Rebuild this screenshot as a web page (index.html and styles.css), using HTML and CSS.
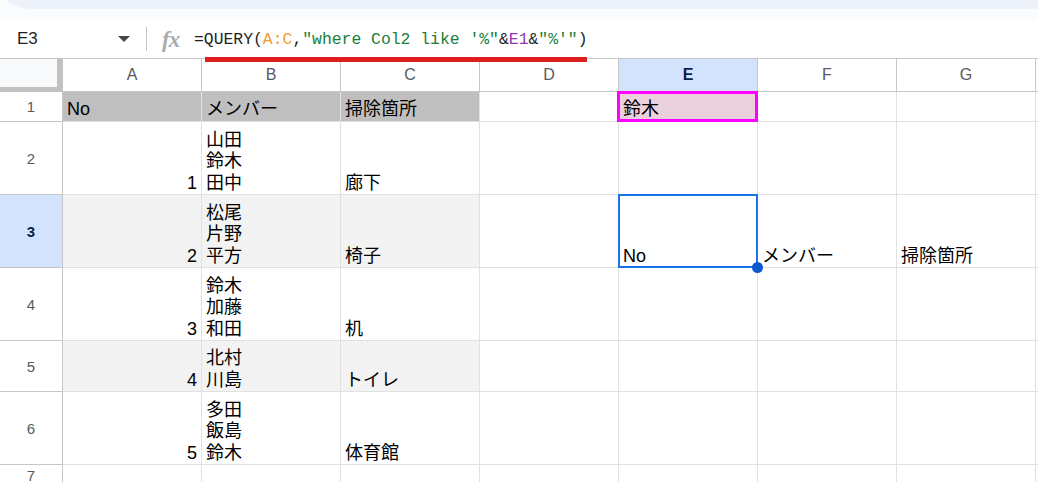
FILE: index.html
```html
<!DOCTYPE html>
<html lang="ja">
<head>
<meta charset="utf-8">
<title>シート1</title>
<link rel="stylesheet" href="styles.css">
</head>
<body>
<div class="top"><div class="toolbar-edge"></div></div>

<div class="fbar">
  <div class="namebox">
    <span class="ref">E3</span>
    <span class="caret"></span>
  </div>
  <div class="sep"></div>
  <span class="fx">fx</span>
  <div class="formula"><span>=QUERY(</span><span class="f-range">A:C</span><span>,</span><span class="f-str">"where Col2 like '%"</span><span>&amp;</span><span class="f-ref">E1</span><span>&amp;</span><span class="f-str">"%'"</span><span>)</span></div>
  <div class="mark"></div>
</div>

<div class="sheet">
  <!-- column headers -->
  <div class="corner"></div>
  <div class="ch">A</div>
  <div class="ch">B</div>
  <div class="ch">C</div>
  <div class="ch">D</div>
  <div class="ch ch-sel">E</div>
  <div class="ch">F</div>
  <div class="ch">G</div>
  <div class="ch ch-end"></div>

  <!-- row 1 -->
  <div class="rh">1</div>
  <div class="c hd">No</div>
  <div class="c hd">メンバー</div>
  <div class="c hd">掃除箇所</div>
  <div class="c"></div>
  <div class="c key">鈴木</div>
  <div class="c"></div>
  <div class="c"></div>
  <div class="c c-end"></div>

  <!-- row 2 -->
  <div class="rh">2</div>
  <div class="c num">1</div>
  <div class="c">山田<br>鈴木<br>田中</div>
  <div class="c">廊下</div>
  <div class="c"></div>
  <div class="c"></div>
  <div class="c"></div>
  <div class="c"></div>
  <div class="c c-end"></div>

  <!-- row 3 -->
  <div class="rh rh-sel">3</div>
  <div class="c band num">2</div>
  <div class="c band">松尾<br>片野<br>平方</div>
  <div class="c band">椅子</div>
  <div class="c"></div>
  <div class="c active">No</div>
  <div class="c">メンバー</div>
  <div class="c">掃除箇所</div>
  <div class="c c-end"></div>

  <!-- row 4 -->
  <div class="rh">4</div>
  <div class="c num">3</div>
  <div class="c">鈴木<br>加藤<br>和田</div>
  <div class="c">机</div>
  <div class="c"></div>
  <div class="c"></div>
  <div class="c"></div>
  <div class="c"></div>
  <div class="c c-end"></div>

  <!-- row 5 -->
  <div class="rh">5</div>
  <div class="c band num">4</div>
  <div class="c band">北村<br>川島</div>
  <div class="c band">トイレ</div>
  <div class="c"></div>
  <div class="c"></div>
  <div class="c"></div>
  <div class="c"></div>
  <div class="c c-end"></div>

  <!-- row 6 -->
  <div class="rh">6</div>
  <div class="c num">5</div>
  <div class="c">多田<br>飯島<br>鈴木</div>
  <div class="c">体育館</div>
  <div class="c"></div>
  <div class="c"></div>
  <div class="c"></div>
  <div class="c"></div>
  <div class="c c-end"></div>

  <!-- row 7 -->
  <div class="rh rh-top">7</div>
  <div class="c"></div>
  <div class="c"></div>
  <div class="c"></div>
  <div class="c"></div>
  <div class="c"></div>
  <div class="c"></div>
  <div class="c"></div>
  <div class="c c-end"></div>
</div>
</body>
</html>
```

FILE: styles.css
```css
* {
  box-sizing: border-box;
}

html,
body {
  margin: 0;
  padding: 0;
  width: 1038px;
  height: 482px;
  overflow: hidden;
  background: #ffffff;
  font-family: "Liberation Sans", "Noto Sans CJK JP", sans-serif;
}

/* strip below the toolbar */
.top {
  height: 20px;
  background: #f9fbfd;
}

.toolbar-edge {
  height: 9px;
  margin-left: 8px;
  background: #edf2fa;
  border-bottom-left-radius: 26px 9px;
}

/* formula bar */
.fbar {
  position: relative;
  height: 39px;
  display: flex;
  align-items: center;
  border-bottom: 1px solid #c7c7c7;
  background: #ffffff;
}

.namebox {
  width: 146px;
  display: flex;
  align-items: center;
  padding-left: 17px;
}

.ref {
  font-size: 17px;
  color: #1f1f1f;
}

.caret {
  margin-left: auto;
  margin-right: 16px;
  width: 0;
  height: 0;
  border-left: 6px solid transparent;
  border-right: 6px solid transparent;
  border-top: 6px solid #444746;
}

.sep {
  width: 1px;
  height: 24px;
  background: #c4c7c5;
}

.fx {
  margin-left: 15px;
  width: 21px;
  font-family: "Liberation Serif", serif;
  font-style: italic;
  font-weight: bold;
  font-size: 23px;
  color: #a9acaf;
  letter-spacing: -1px;
  line-height: 1;
}

.formula {
  margin-left: 11px;
  font-family: "Liberation Mono", monospace;
  font-size: 16.4px;
  color: #1f1f1f;
  white-space: pre;
}

.f-range {
  color: #f29b2f;
}

.f-str {
  color: #188038;
}

.f-ref {
  color: #9334b6;
}

/* highlight stroke under the formula */
.mark {
  position: absolute;
  left: 205px;
  top: 37px;
  width: 382px;
  height: 5px;
  background: #dd1f1f;
}

/* grid */
.sheet {
  display: grid;
  grid-template-columns: 63px repeat(7, 139px) 1fr;
  grid-template-rows: 33px 30px 73px 73px 73px 51px 73px 1fr;
  height: 423px;
}

.corner {
  background: #f8f9fa;
  border-right: 6px solid #c2c2c2;
  border-bottom: 5px solid #c2c2c2;
}

.ch {
  display: flex;
  align-items: center;
  justify-content: center;
  font-size: 16px;
  color: #575a5e;
  border-right: 1px solid #c7c7c7;
  border-bottom: 1px solid #c7c7c7;
  background: #ffffff;
}

.ch-sel {
  background: #d3e3fd;
  color: #0b1f44;
  font-weight: bold;
}

.ch-end {
  border-right: none;
}

.rh {
  display: flex;
  align-items: center;
  justify-content: center;
  font-size: 15px;
  color: #575a5e;
  border-right: 1px solid #c7c7c7;
  border-bottom: 1px solid #c7c7c7;
  background: #ffffff;
}

.rh-sel {
  background: #d3e3fd;
  color: #0b1f44;
  font-weight: bold;
}

.rh-top {
  align-items: flex-start;
  padding-top: 2px;
}

.c {
  position: relative;
  display: flex;
  flex-direction: column;
  justify-content: flex-end;
  padding: 0 4px 0 4px;
  font-size: 18px;
  line-height: 21.5px;
  color: #000000;
  border-right: 1px solid #e1e1e1;
  border-bottom: 1px solid #e1e1e1;
  white-space: nowrap;
}

.c-end {
  border-right: none;
}

.hd {
  background: #bfbfbf;
  padding-bottom: 1px;
}

.band {
  background: #f3f3f3;
}

.num {
  align-items: flex-end;
  padding-right: 4px;
}

/* lookup key cell with its magenta outline */
.key {
  background: #ead1dc;
  padding-bottom: 1px;
}

.key::after {
  content: "";
  position: absolute;
  top: -1px;
  left: -2px;
  right: -1px;
  bottom: -1px;
  border: 3px solid #ff00ff;
}

/* active cell */
.active::after {
  content: "";
  position: absolute;
  top: -1px;
  left: -1px;
  right: -1px;
  bottom: -1px;
  border: 2px solid #1a73e8;
}

.active::before {
  content: "";
  position: absolute;
  right: -6px;
  bottom: -6px;
  width: 11px;
  height: 11px;
  border-radius: 50%;
  background: #0b57d0;
  z-index: 2;
}
```
